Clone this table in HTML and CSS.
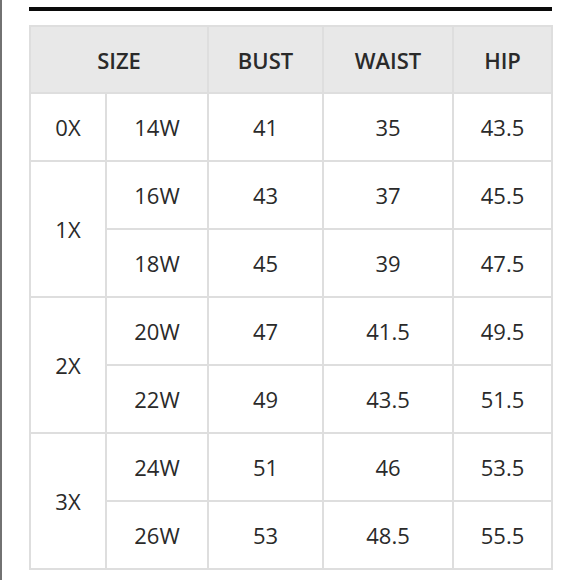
FILE: index.html
```html
<!DOCTYPE html>
<html>
<head>
<meta charset="utf-8">
<link rel="stylesheet" href="styles.css">
</head>
<body>
<div class="page">
  <div class="rule"></div>
  <table class="chart">
    <colgroup>
      <col class="c1"><col class="c2"><col class="c3"><col class="c4"><col class="c5">
    </colgroup>
    <thead>
      <tr><th colspan="2">SIZE</th><th>BUST</th><th>WAIST</th><th>HIP</th></tr>
    </thead>
    <tbody>
      <tr><td>0X</td><td>14W</td><td>41</td><td>35</td><td>43.5</td></tr>
      <tr><td rowspan="2">1X</td><td>16W</td><td>43</td><td>37</td><td>45.5</td></tr>
      <tr><td>18W</td><td>45</td><td>39</td><td>47.5</td></tr>
      <tr><td rowspan="2">2X</td><td>20W</td><td>47</td><td>41.5</td><td>49.5</td></tr>
      <tr><td>22W</td><td>49</td><td>43.5</td><td>51.5</td></tr>
      <tr><td rowspan="2">3X</td><td>24W</td><td>51</td><td>46</td><td>53.5</td></tr>
      <tr><td>26W</td><td>53</td><td>48.5</td><td>55.5</td></tr>
    </tbody>
  </table>
</div>
</body>
</html>
```
FILE: styles.css
```css
html, body {
  margin: 0;
  padding: 0;
  background: #ffffff;
}
.page {
  height: 580px;
  border-left: 2px solid #727272;
  padding-left: 27px;
  padding-top: 7px;
  box-sizing: border-box;
  font-family: "Open Sans", "Liberation Sans", sans-serif;
  color: #2a2a2a;
}
.rule {
  width: 523px;
  height: 4px;
  background: #0a0a0a;
}
.chart {
  margin-top: 14px;
  width: 524px;
  border-collapse: collapse;
  table-layout: fixed;
}
.c1 { width: 76px; }
.c2 { width: 102px; }
.c3 { width: 115px; }
.c4 { width: 130px; }
.c5 { width: 99px; }
.chart th, .chart td {
  border: 2px solid #dedede;
  padding: 0;
  text-align: center;
  vertical-align: middle;
  font-size: 22px;
  line-height: 30px;
}
.chart th {
  background: #e8e8e8;
  font-weight: 600;
  height: 65px;
}
.chart td {
  font-weight: 400;
  height: 66px;
}
```
